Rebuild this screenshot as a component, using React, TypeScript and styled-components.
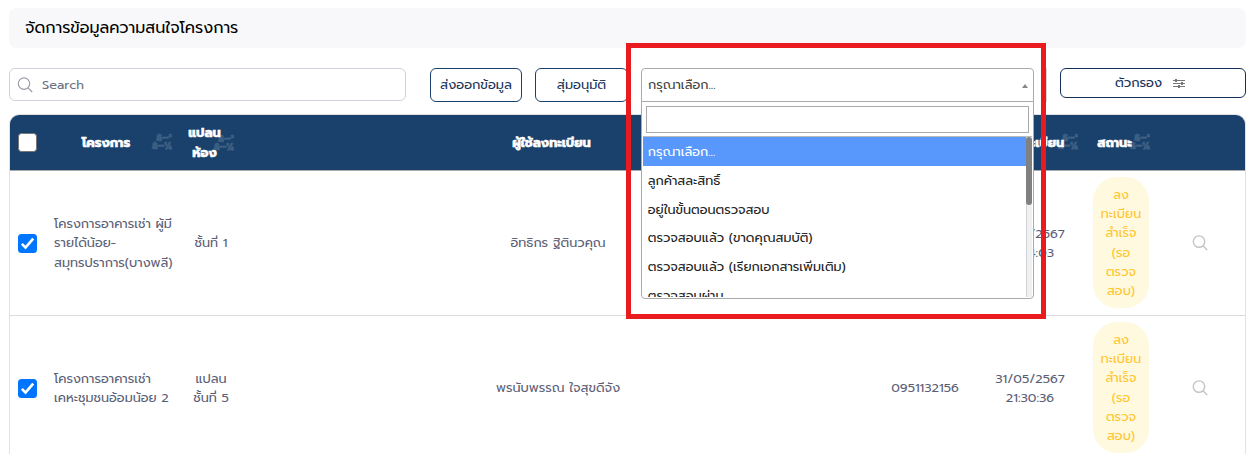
import React from "react";
import styled, { createGlobalStyle } from "styled-components";

const Global = createGlobalStyle`
  * { box-sizing: border-box; }
  body {
    margin: 0;
    background: #fff;
    font-family: Prompt, Kanit, "Noto Sans Thai", "Noto Sans", sans-serif;
    font-size: 12.8px;
    line-height: 19.2px;
  }
`;

const Page = styled.div`
  position: relative;
  width: 1252px;
  height: 454px;
  overflow: hidden;
  padding: 8px 6px 0 9px;
`;

const Title = styled.h1`
  margin: 0;
  height: 40px;
  padding-left: 16px;
  display: flex;
  align-items: center;
  border-radius: 8px;
  background: #f8f8fa;
  color: #000;
  font-size: 16px;
  line-height: 24px;
  font-weight: 400;
`;

const Text = styled.span`
  white-space: nowrap;
`;

const Toolbar = styled.div`
  display: flex;
  align-items: flex-start;
  height: 46px;
  margin-top: 20px;
`;

const SearchBox = styled.div`
  width: 397px;
  height: 33px;
  display: flex;
  align-items: center;
  gap: 9px;
  padding-left: 7px;
  border: 1px solid #cfd2dc;
  border-radius: 6px;
  color: #6b7280;
`;

const Button = styled.button<{ $width: number; $left: number; $height?: number }>`
  width: ${(p) => p.$width}px;
  height: ${(p) => p.$height ?? 34}px;
  margin-left: ${(p) => p.$left}px;
  padding: 0;
  flex: none;
  display: flex;
  align-items: center;
  justify-content: center;
  gap: 11px;
  border: 1px solid #19416c;
  border-radius: 6px;
  background: #fff;
  color: #17335a;
  font: inherit;
  font-size: 13px;
`;

const FilterButton = styled(Button)`
  padding-right: 6px;
  border-color: #14305a;
  color: #14305a;
`;

const Select = styled.div`
  position: relative;
  width: 393px;
  height: 34px;
  margin-left: 13px;
  flex: none;
  display: flex;
  align-items: center;
  justify-content: space-between;
  padding: 0 5px 0 6px;
  border: 1px solid #aaa;
  border-radius: 4px 4px 0 0;
  background: #fff;
  color: #444;
  z-index: 2;
`;

const Arrow = styled.i`
  border: 3px solid transparent;
  border-top: 0;
  border-bottom: 4px solid #888;
  margin-top: 2px;
`;

const Menu = styled.div`
  position: absolute;
  top: 32px;
  left: -1px;
  width: 393px;
  height: 198px;
  padding: 4px 1px 1px;
  border: 1px solid #aaa;
  border-radius: 0 0 4px 4px;
  background: #fff;
  color: #222;
`;

const MenuSearch = styled.div`
  height: 27px;
  margin: 0 3px 3px 3px;
  border: 1px solid #aaa;
`;

const ListBox = styled.div`
  display: flex;
  height: 161px;
  overflow: hidden;
  border-top: 1px solid #bbb;
`;

const Options = styled.div`
  flex: 1;
`;

const Option = styled.div<{ $active?: boolean }>`
  height: 28.8px;
  padding: 5.1px 4.8px 4.5px;
  background: ${(p) => (p.$active ? "#5897fb" : "#fff")};
  color: ${(p) => (p.$active ? "#fff" : "#222")};
`;

const Track = styled.div`
  width: 6px;
  background: #f0f0f0;
  border-left: 1px solid #cfd4d8;
`;

const Thumb = styled.div`
  width: 6px;
  height: 68px;
  margin-left: -1px;
  border-radius: 3px;
  background: #808080;
`;

const GhostEdge = styled.div`
  width: 1px;
  height: 34px;
  margin-left: 12px;
  background: #d5d5d8;
`;

const Table = styled.div`
  height: 400px;
  border: 1px solid #e2e2e4;
  border-radius: 10px 10px 0 0;
  overflow: hidden;
`;

const columns = "35px 135px 62px 238px 156px 244px 90px 120px 62px 95px";

const HeadRow = styled.div`
  height: 56px;
  display: grid;
  grid-template-columns: ${columns};
  align-items: center;
  border-bottom: 1px solid #aaa;
  background: #19416c;
  color: #fff;
  font-weight: 700;
`;

const Row = styled.div`
  height: 145px;
  display: grid;
  grid-template-columns: ${columns};
  align-items: center;
  border-bottom: 1px solid #dcdcdf;
  color: #5b5e75;
`;

const Cell = styled.div<{ $left?: boolean }>`
  display: flex;
  flex-direction: column;
  align-items: ${(p) => (p.$left ? "flex-start" : "center")};
  padding-left: ${(p) => (p.$left ? 9 : 0)}px;
`;

const HeadCell = styled(Cell)`
  position: relative;
  padding-right: 13px;
`;

const HeadText = styled(Text)`
  -webkit-text-stroke: 0.5px #fff;
`;

const Check = styled.span<{ $on?: boolean }>`
  width: 19px;
  height: 19px;
  display: flex;
  align-items: center;
  justify-content: center;
  border: ${(p) => (p.$on ? 0 : "1.5px solid #767676")};
  border-radius: 3.5px;
  background: ${(p) => (p.$on ? "#0075ff" : "#fff")};
`;

const SortMark = styled.span<{ $x: number }>`
  position: absolute;
  left: ${(p) => p.$x}px;
  top: 50%;
  width: 21px;
  margin-top: -8px;
  color: #fff;
  opacity: 0.16;
  font-size: 10px;
  line-height: 8px;
  -webkit-text-stroke: 0.4px #fff;
  text-align: right;
  white-space: nowrap;
  span { display: block; }
`;

const Badge = styled.div`
  width: 56px;
  height: 131px;
  display: flex;
  flex-direction: column;
  align-items: center;
  justify-content: center;
  margin-top: -1px;
  border-radius: 24px;
  background: #fff9df;
  color: #ffc52b;
`;

const Highlight = styled.div`
  position: absolute;
  left: 626px;
  top: 43px;
  width: 420px;
  height: 276px;
  border: 5px solid #ea1b1f;
  z-index: 3;
`;

const Lens = ({ color, width = 1.2 }: { color: string; width?: number }) => (
  <svg width={16} height={16} viewBox="0 0 16 16" fill="none" stroke={color} strokeWidth={width}>
    <circle cx="7" cy="6.6" r="5.7" />
    <path d="M11 10.8 15.2 15" />
  </svg>
);

const Tick = () => (
  <svg width="19" height="19" viewBox="0 0 19 19" fill="none" stroke="#fff" strokeWidth="2.7">
    <path d="M3.9 9.9 7.5 13.6 15.2 4.7" />
  </svg>
);

const Sliders = () => (
  <svg width="12" height="10" viewBox="0 0 12 10" fill="none" stroke="#777">
    <path d="M0 2.5H12M0 5.5H12M0 8.5H12" />
    <path d="M3 1V4M9 4V7M6 7V10" strokeWidth="2" />
  </svg>
);

const Sort = ({ x }: { x: number }) => (
  <SortMark $x={x}>
    <span>â–²</span>
    <span>â–¼</span>
  </SortMark>
);

const Lines = ({ lines }: { lines: string[] }) => (
  <>
    {lines.map((text) => (
      <Text key={text}>{text}</Text>
    ))}
  </>
);

const status = ["ลง", "ทะเบียน", "สำเร็จ", "(รอ", "ตรวจ", "สอบ)"];

const rows = [
  {
    project: ["โครงการอาคารเช่า ผู้มี", "รายได้น้อย-", "สมุทรปราการ(บางพลี)"],
    plan: ["ชั้นที่ 1"],
    user: ["อิทธิกร ฐิตินวคุณ"],
    phone: [],
    date: ["31/05/2567", "21:34:03"],
  },
  {
    project: ["โครงการอาคารเช่า", "เคหะชุมชนอ้อมน้อย 2"],
    plan: ["แปลน", "ชั้นที่ 5"],
    user: ["พรนับพรรณ ใจสุขดีจัง"],
    phone: ["0951132156"],
    date: ["31/05/2567", "21:30:36"],
  },
];

const options = [
  "กรุณาเลือก...",
  "ลูกค้าสละสิทธิ์",
  "อยู่ในขั้นตอนตรวจสอบ",
  "ตรวจสอบแล้ว (ขาดคุณสมบัติ)",
  "ตรวจสอบแล้ว (เรียกเอกสารเพิ่มเติม)",
  "ตรวจสอบผ่าน",
];

export default function App() {
  return (
    <Page>
      <Global />
      <Title>จัดการข้อมูลความสนใจโครงการ</Title>
      <Toolbar>
        <SearchBox>
          <Lens color="#9a9da8" />
          <Text>Search</Text>
        </SearchBox>
        <Button $width={92} $left={24}>ส่งออกข้อมูล</Button>
        <Button $width={93} $left={13}>สุ่มอนุมัติ</Button>
        <Select>
          <Text>กรุณาเลือก...</Text>
          <Arrow />
          <Menu>
            <MenuSearch />
            <ListBox>
              <Options>
                {options.map((text, i) => (
                  <Option key={text} $active={i === 0}>{text}</Option>
                ))}
              </Options>
              <Track><Thumb /></Track>
            </ListBox>
          </Menu>
        </Select>
        <GhostEdge />
        <FilterButton $width={186} $left={13} $height={30}>
          <Text>ตัวกรอง</Text>
          <Sliders />
        </FilterButton>
      </Toolbar>
      <Table>
        <HeadRow>
          <Cell><Check /></Cell>
          <HeadCell><Sort x={106} /><HeadText>โครงการ</HeadText></HeadCell>
          <HeadCell><Sort x={33} /><HeadText>แปลน</HeadText><HeadText>ห้อง</HeadText></HeadCell>
          <HeadCell />
          <HeadCell><HeadText>ผู้ใช้ลงทะเบียน</HeadText></HeadCell>
          <HeadCell />
          <HeadCell />
          <HeadCell><Sort x={87} /><HeadText>วันที่ลงทะเบียน</HeadText></HeadCell>
          <HeadCell><Sort x={39} /><HeadText>สถานะ</HeadText></HeadCell>
          <HeadCell />
        </HeadRow>
        {rows.map((r, i) => (
          <Row key={i}>
            <Cell><Check $on><Tick /></Check></Cell>
            <Cell $left><Lines lines={r.project} /></Cell>
            <Cell><Lines lines={r.plan} /></Cell>
            <Cell />
            <Cell><Lines lines={r.user} /></Cell>
            <Cell />
            <Cell><Lines lines={r.phone} /></Cell>
            <Cell><Lines lines={r.date} /></Cell>
            <Cell><Badge><Lines lines={status} /></Badge></Cell>
            <Cell><Lens color="#c4c4c4" width={1.4} /></Cell>
          </Row>
        ))}
      </Table>
      <Highlight />
    </Page>
  );
}
